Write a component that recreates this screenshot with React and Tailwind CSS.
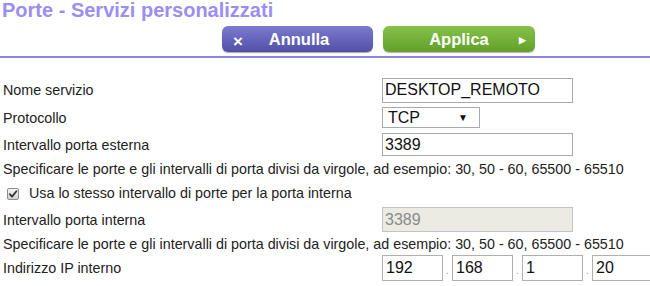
import React from "react";

const font = { fontFamily: '"Liberation Sans", Arial, sans-serif' };

function Row({ h, label, children }) {
  return (
    <div className={`flex items-center ${h}`}>
      <div className="w-[382px] shrink-0 pl-[3px] pt-[2px] text-[14.3px] text-[#222]">{label}</div>
      {children}
    </div>
  );
}

function TextBox({ value, w = "w-[191px]", h = "h-[25px]", disabled = false }) {
  return (
    <div
      className={`${w} ${h} flex items-center border pl-[2px] text-[16px] ${
        disabled
          ? "border-[#c3c3c3] bg-[#ebebe4] text-[#8a8a8a]"
          : "border-[#a9a9a9] bg-white text-[#111]"
      }`}
    >
      {value}
    </div>
  );
}

function IpBox({ value }) {
  return (
    <div className="w-[61px] h-[26px] shrink-0 flex items-center border border-[#b0b0b0] bg-white pl-[3px] text-[16px] text-[#111]">
      {value}
    </div>
  );
}

function Dot() {
  return (
    <div className="w-[9px] h-[26px] shrink-0 flex items-end justify-center pb-[5px] text-[10px] leading-none text-[#999]">
      .
    </div>
  );
}

export default function App() {
  return (
    <div className="w-[650px] h-[286px] overflow-hidden bg-white" style={font}>
      <div className="pl-[2px] text-[20px] font-bold leading-[20px] text-[#9b8ef0] h-[26px]">
        Porte - Servizi personalizzati
      </div>
      <div className="flex pl-[222px] gap-[10px] h-[26px]">
        <div className="relative w-[151px] h-[26px] rounded-[6px] bg-gradient-to-b from-[#7d7bd0] to-[#5250a6] shadow-[0_1px_1px_rgba(0,0,0,0.35)] flex items-center justify-center text-white font-bold text-[16.5px]">
          <span className="absolute left-[11px] top-[3px] text-[17px]">×</span>
          <span className="pl-[3px]">Annulla</span>
        </div>
        <div className="relative w-[152px] h-[26px] rounded-[6px] bg-gradient-to-b from-[#86c249] to-[#62a02a] shadow-[0_1px_1px_rgba(0,0,0,0.3)] flex items-center justify-center text-white font-bold text-[16.5px]">
          <span>Applica</span>
          <span className="absolute left-[136px] top-[8px] text-[9px]">▶</span>
        </div>
      </div>
      <div className="mt-[4px] h-[2px] bg-[#8c87e2]" />
      <div className="mt-[19px] flex flex-col">
        <Row h="h-[26px]" label="Nome servizio">
          <TextBox value="DESKTOP_REMOTO" />
        </Row>
        <Row h="h-[29px]" label="Protocollo">
          <div className="w-[98px] h-[21px] flex items-center border border-[#a9a9a9] bg-white text-[16px] text-[#111] pl-[5px]">
            <span className="w-[70px]">TCP</span>
            <span className="text-[10px]">▼</span>
          </div>
        </Row>
        <Row h="h-[25px]" label="Intervallo porta esterna">
          <TextBox value="3389" h="h-[23px]" />
        </Row>
        <div className="h-[24px] flex items-center pl-[3px] pt-[2px] text-[14.3px] text-[#222]">
          Specificare le porte e gli intervalli di porta divisi da virgole, ad esempio: 30, 50 - 60, 65500 - 65510
        </div>
        <div className="h-[26px] flex items-center pl-[7px] text-[14.3px] text-[#222]">
          <div className="w-[12px] h-[12px] rounded-[2px] border border-[#8e8e8e] bg-gradient-to-b from-[#f4f4f4] to-[#d2d2d2] flex items-center justify-center">
            <svg width="10" height="10" viewBox="0 0 10 10">
              <path d="M1.8 5.2 L4 7.6 L8.4 2.2" fill="none" stroke="#333" strokeWidth="1.8" strokeLinecap="round" strokeLinejoin="round" />
            </svg>
          </div>
          <span className="ml-[10px]">Usa lo stesso intervallo di porte per la porta interna</span>
        </div>
        <Row h="h-[25px]" label="Intervallo porta interna">
          <TextBox value="3389" disabled />
        </Row>
        <div className="h-[23px] flex items-center pl-[3px] pt-[2px] text-[14.3px] text-[#222]">
          Specificare le porte e gli intervalli di porta divisi da virgole, ad esempio: 30, 50 - 60, 65500 - 65510
        </div>
        <Row h="h-[26px]" label="Indirizzo IP interno">
          <div className="flex">
            <IpBox value="192" />
            <Dot />
            <IpBox value="168" />
            <Dot />
            <IpBox value="1" />
            <Dot />
            <IpBox value="20" />
          </div>
        </Row>
      </div>
    </div>
  );
}
